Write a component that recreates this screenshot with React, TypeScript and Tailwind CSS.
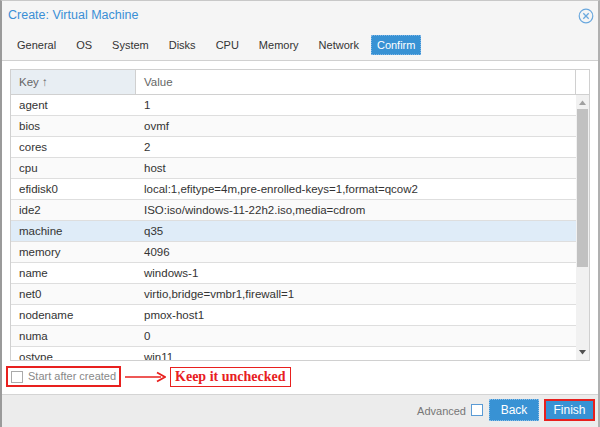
import React from "react";

const rows: [string, string][] = [
  ["agent", "1"],
  ["bios", "ovmf"],
  ["cores", "2"],
  ["cpu", "host"],
  ["efidisk0", "local:1,efitype=4m,pre-enrolled-keys=1,format=qcow2"],
  ["ide2", "ISO:iso/windows-11-22h2.iso,media=cdrom"],
  ["machine", "q35"],
  ["memory", "4096"],
  ["name", "windows-1"],
  ["net0", "virtio,bridge=vmbr1,firewall=1"],
  ["nodename", "pmox-host1"],
  ["numa", "0"],
  ["ostype", "win11"],
];

const tabs = ["General", "OS", "System", "Disks", "CPU", "Memory", "Network"];

export default function App() {
  return (
    <div
      className="w-[600px] h-[427px] bg-[#f5f5f5] border-l-2 border-l-[#9a9a9a] border-t border-t-[#c8c8c8] border-r-2 border-r-[#b0b0b0] flex flex-col overflow-hidden"
      style={{ fontFamily: '"Liberation Sans", Arial, sans-serif' }}
    >
      {/* Title */}
      <div className="h-[29px] flex items-center justify-between pl-[6px] pr-[4px]">
        <span className="text-[12.5px] text-[#3a8fd5]">Create: Virtual Machine</span>
        <svg width="16" height="16" viewBox="0 0 16 16" className="mt-[1px]">
          <circle cx="8" cy="8" r="6.8" fill="none" stroke="#6aa8de" strokeWidth="1.2" />
          <path d="M5.3 5.3 L10.7 10.7 M10.7 5.3 L5.3 10.7" stroke="#6aa8de" strokeWidth="1.3" />
        </svg>
      </div>
      {/* Tabs */}
      <div className="h-[30px] flex items-center pl-[9px] gap-[8px] text-[11px] text-[#333]">
        {tabs.map((t) => (
          <span key={t} className="px-[6px] leading-[20px]">
            {t}
          </span>
        ))}
        <span className="-ml-[2px] px-[5px] leading-[18px] bg-[#3892d4] text-white border border-dotted border-[#7fb6e6]">
          Confirm
        </span>
      </div>
      {/* Panel */}
      <div className="h-[334px] bg-white border-t border-[#d0d0d0] pt-[8px] px-[8px] flex flex-col">
        <div className="border border-[#d0d0d0] flex flex-col text-[11.5px] text-[#333]">
          {/* Header */}
          <div className="h-[25px] flex border-b border-[#d0d0d0]">
            <div className="w-[125px] bg-[#e8eef3] border-r border-[#d0d0d0] flex items-center pl-[8px] pt-[2px] text-[#666]">
              Key ↑
            </div>
            <div className="flex-1 flex items-center pl-[8px] pt-[2px] text-[#666] border-r border-[#d0d0d0]">Value</div>
            <div className="w-[13px]" />
          </div>
          {/* Body */}
          <div className="h-[265px] flex overflow-hidden">
            <div className="flex-1 flex flex-col overflow-hidden">
              {rows.map(([k, v], i) => (
                <div
                  key={k}
                  className={`h-[21px] shrink-0 flex items-center pt-[1px] border-b border-[#dedede] ${
                    k === "machine" ? "bg-[#dfecf8]" : i % 2 === 1 ? "bg-[#fafafa]" : "bg-white"
                  }`}
                >
                  <div className="w-[125px] pl-[8px]">{k}</div>
                  <div className="flex-1 pl-[8px] whitespace-nowrap">{v}</div>
                </div>
              ))}
            </div>
            {/* Scrollbar */}
            <div className="w-[13px] bg-[#f1f1f1] flex flex-col items-center">
              <div className="h-[14px] flex items-center justify-center">
                <svg width="7" height="5" viewBox="0 0 7 5">
                  <path d="M0 5 L3.5 0.5 L7 5 Z" fill="#a0a0a0" />
                </svg>
              </div>
              <div className="w-[11px] h-[158px] bg-[#c1c1c1]" />
              <div className="flex-1" />
              <div className="h-[16px] flex items-center justify-center">
                <svg width="7" height="5" viewBox="0 0 7 5">
                  <path d="M0 0 L7 0 L3.5 4.5 Z" fill="#505050" />
                </svg>
              </div>
            </div>
          </div>
        </div>
        {/* Start after created */}
        <div className="mt-[5px] -ml-[4px] flex items-center">
          <div className="h-[21px] border-2 border-[#e8201e] flex items-center pl-[3px] pr-[3px] gap-[5px]">
            <span className="w-[12px] h-[12px] border border-[#aaa] bg-white" />
            <span className="text-[11px] text-[#888]">Start after created</span>
          </div>
          <svg width="42" height="12" viewBox="0 0 42 12" className="ml-[3px]">
            <path d="M1 6 L37 6" stroke="#e8201e" strokeWidth="1.6" />
            <path d="M33 1.5 L41 6 L33 10.5" fill="none" stroke="#e8201e" strokeWidth="1.8" />
          </svg>
          <div className="ml-[4px] h-[20px] border border-[#e8201e] px-[4px] flex items-center">
            <span
              className="text-[14px] font-bold text-[#e8201e] leading-none"
              style={{ fontFamily: '"Liberation Serif", "Times New Roman", serif' }}
            >
              Keep it unchecked
            </span>
          </div>
        </div>
      </div>
      {/* Footer */}
      <div className="flex-1 bg-[#ececec] border-t border-[#d4d4d4] flex items-start pt-[4px] justify-end pr-[3px] gap-[5px]">
        <span className="text-[11px] text-[#777] mt-[4px]">Advanced</span>
        <span className="w-[12px] h-[12px] border border-[#5b9bd5] bg-white mr-[1px] mt-[5px]" />
        <button className="w-[50px] h-[22px] bg-[#3892d4] text-white text-[12px] border border-dotted border-[#8cbfe8]">
          Back
        </button>
        <button className="w-[51px] h-[22px] bg-[#3892d4] text-white text-[12px] border-2 border-[#e8201e]">
          Finish
        </button>
      </div>
    </div>
  );
}
